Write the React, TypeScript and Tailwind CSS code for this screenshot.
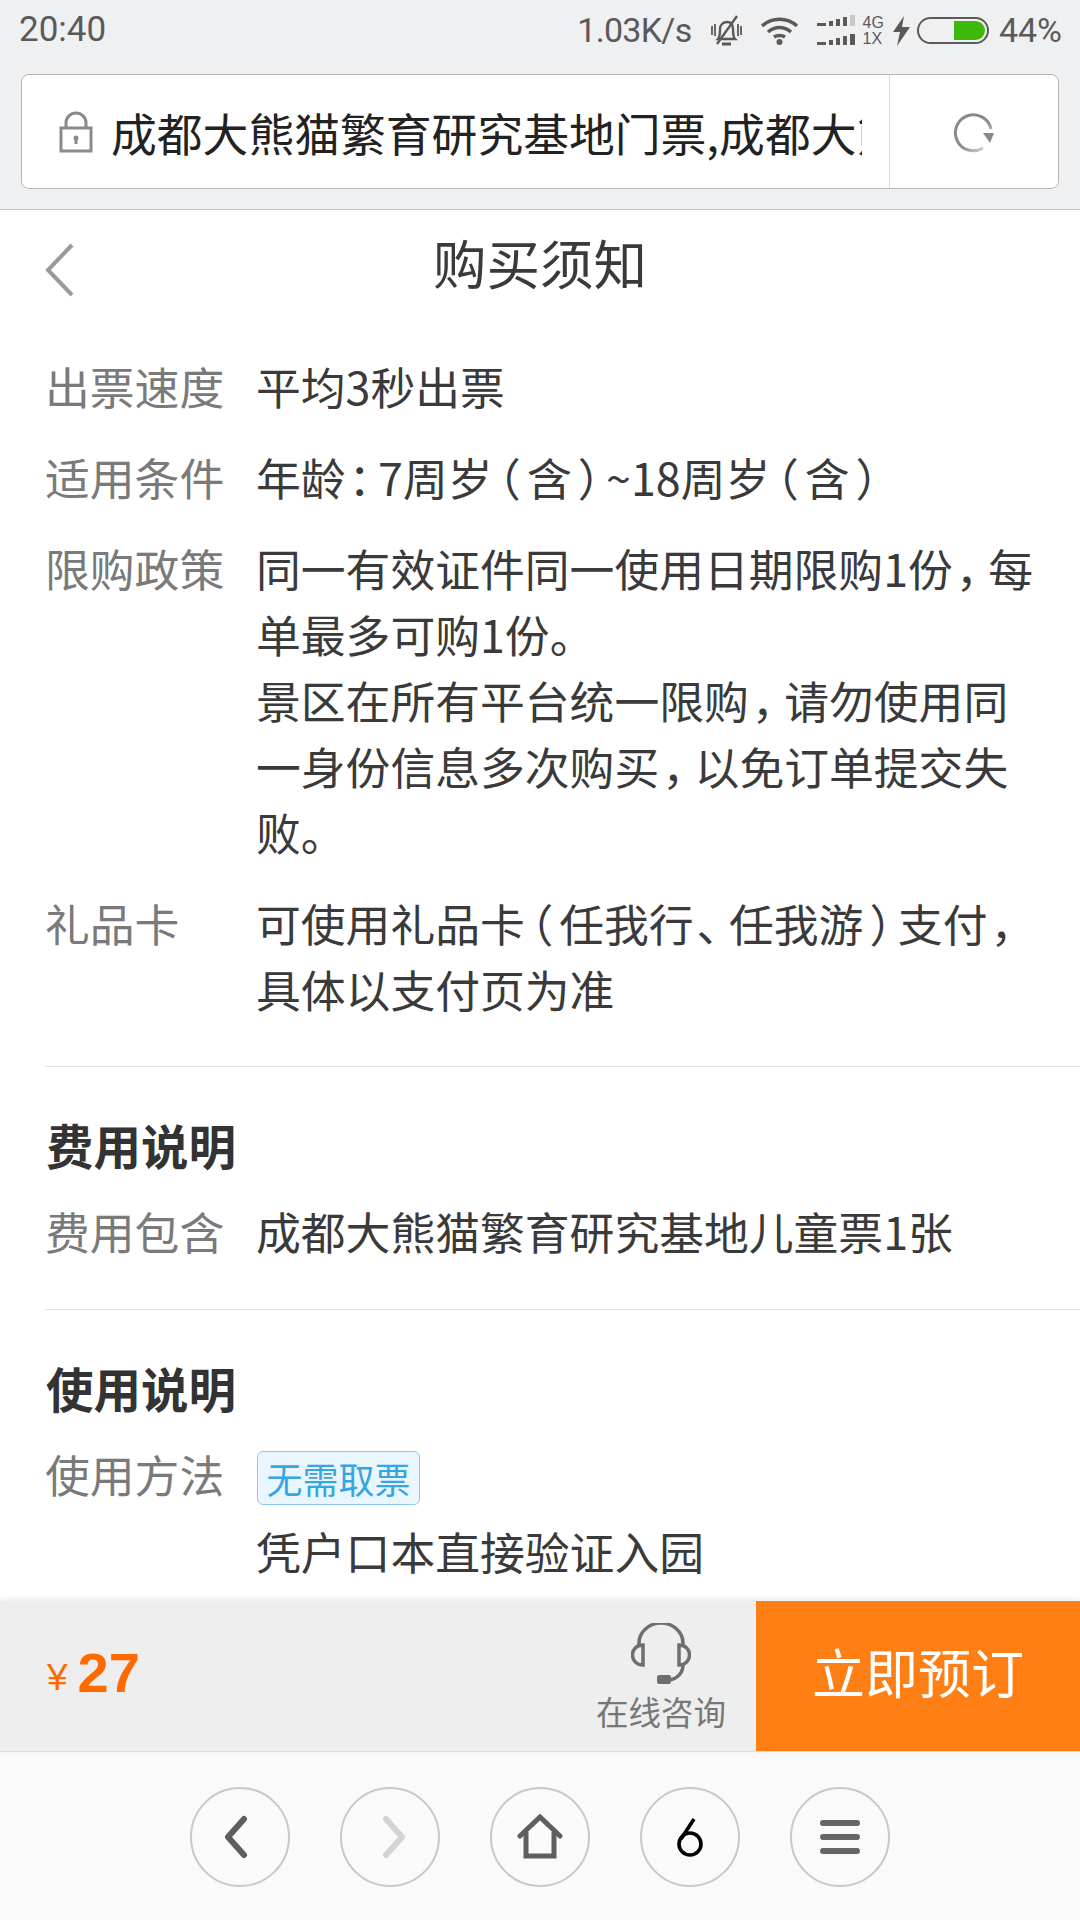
const SANS = "font-['Noto_Sans_CJK_SC','Noto_Sans',sans-serif]";

function Row({ label, children }: { label: string; children: React.ReactNode }) {
  return (
    <div className="flex">
      <div className="w-[211px] shrink-0 text-[#7a7a7a]">{label}</div>
      <div className="flex-1 text-[#3a3a3a]">{children}</div>
    </div>
  );
}

function Paren({ c }: { c: string }) {
  return <span className="px-[6px] [font-feature-settings:'halt']">{c}</span>;
}

function Comma({ c }: { c: string }) {
  return <span className="pl-[3px] pr-[10px] [font-feature-settings:'halt']">{c}</span>;
}

function Colon({ c }: { c: string }) {
  return <span className="pl-[3px] pr-[7px] [font-feature-settings:'halt']">{c}</span>;
}

function Circle({ children }: { children: React.ReactNode }) {
  return (
    <div className="w-[100px] h-[100px] rounded-full border-2 border-[#c8c8c8] flex items-center justify-center">
      {children}
    </div>
  );
}

export default function App() {
  return (
    <div className={`w-[1080px] h-[1920px] flex flex-col overflow-hidden bg-white ${SANS}`}>
      <div className="h-[210px] shrink-0 bg-[#eff0f2] border-b border-[#c4c4c4] flex flex-col">
        <div className="h-[60px] pt-[1px] flex items-center pl-[19px] pr-[18px] text-[#5a5a5a] font-['Roboto',sans-serif] text-[34px]">
          <span className="text-[35px]">20:40</span>
          <div className="ml-auto flex items-center">
            <span className="tracking-[-0.7px]">1.03K/s</span>
            <svg width="33" height="32" viewBox="0 0 33 32" className="ml-[18px]" fill="none" stroke="#5a5a5a" strokeWidth="2.4">
              <path d="M8 24c2-2 2-6 2-10 0-4 3-7 7-7s6 3 6 7c0 4 0 8 2 10z" />
              <path d="M12 29h9" strokeWidth="3" />
              <path d="M2 11v9M5 9v12M28 9v12M31 11v9" strokeWidth="1.8" />
              <path d="M27 1 7 29" />
            </svg>
            <svg width="39" height="30" viewBox="0 0 39 30" className="ml-[17px]" fill="none" stroke="#5a5a5a" strokeWidth="3.6">
              <path d="M2 10c10-9 25-9 35 0" />
              <path d="M8 16c7-6 16-6 23 0" />
              <path d="M14 21c3-2 8-2 11 0" />
              <circle cx="19.500" cy="26" r="3" fill="#5a5a5a" stroke="none" />
            </svg>
            <svg width="38" height="32" viewBox="0 0 38 32" className="ml-[18px]" fill="#5a5a5a">
              <rect x="0" y="8" width="9" height="3" /><rect x="12" y="6" width="4" height="5" /><rect x="19" y="4" width="4" height="7" /><rect x="26" y="2" width="4" height="9" /><rect x="33" y="0" width="5" height="11" fill="#c9c9c9" />
              <rect x="0" y="27" width="9" height="3" /><rect x="12" y="25" width="4" height="5" /><rect x="19" y="23" width="4" height="7" /><rect x="26" y="21" width="4" height="9" /><rect x="33" y="19" width="5" height="11" />
            </svg>
            <div className="ml-[8px] flex flex-col text-[16px] leading-[16px] text-[#5a5a5a] font-['Liberation_Sans',sans-serif]">
              <span>4G</span>
              <span>1X</span>
            </div>
            <svg width="17" height="30" viewBox="0 0 17 30" className="ml-[9px]" fill="#5a5a5a"><path d="M11 0 0 16h7l-3 14 13-19H9z" /></svg>
            <div className="ml-[7px] w-[72px] h-[27px] rounded-full border-2 border-[#5a5a5a] flex justify-end items-center pr-[2px]">
              <div className="w-[31px] h-[19px] bg-[#3fb80c] rounded-r-full" />
            </div>
            <span className="ml-[10px]">44%</span>
          </div>
        </div>
        <div className="mx-[21px] mt-[14px] h-[115px] bg-white border border-[#b5b5b5] rounded-[8px] flex items-center">
          <svg width="34" height="42" viewBox="0 0 34 42" className="ml-[37px] shrink-0" fill="none" stroke="#8a8a8a" strokeWidth="3">
            <rect x="2" y="17" width="30" height="23" />
            <path d="M7 17v-5a10 10 0 0 1 20 0v5" />
            <circle cx="17" cy="27" r="2.500" fill="#8a8a8a" stroke="none" />
            <path d="M17 28v5" />
          </svg>
          <div className="ml-[18px] w-[751px] shrink-0 overflow-hidden whitespace-nowrap text-[45.8px] leading-[62px] text-[#222222]">
            成都大熊猫繁育研究基地门票,成都大熊猫繁育
          </div>
          <div className="ml-[27px] self-stretch flex-1 border-l border-[#dcdcdc] flex items-center justify-center">
            <svg width="42" height="42" viewBox="0 0 42 42" fill="none" className="mt-[2px]">
              <defs>
                <linearGradient id="refreshFade" x1="0" y1="0" x2="1" y2="1">
                  <stop offset="0.55" stopColor="#8a8a8a" />
                  <stop offset="1" stopColor="#e6e6e6" />
                </linearGradient>
              </defs>
              <path d="M30 36A18 18 0 1 1 38 17" stroke="url(#refreshFade)" strokeWidth="3" />
              <path d="M30 21h11l-4 10z" fill="#8a8a8a" />
            </svg>
          </div>
        </div>
      </div>

      <div className="flex-1 min-h-0 overflow-hidden text-[44.8px] leading-[66px]">
        <div className="h-[111px] flex items-center relative pb-[7px]">
          <svg width="32" height="54" viewBox="0 0 32 54" className="ml-[44px] mt-[15px]" fill="none" stroke="#9a9a9a" strokeWidth="4">
            <path d="M28 2 4 27l24 25" />
          </svg>
          <div className="absolute inset-x-0 text-center text-[53.5px] text-[#3a3a3a]">购买须知</div>
        </div>
        <div className="pl-[45px]">
          <div className="pt-[32px] pr-[36px] pb-[44px] flex flex-col gap-[25px] border-b border-[#e2e2e2]">
            <Row label="出票速度">平均3秒出票</Row>
            <Row label="适用条件">
              年龄<Colon c="：" />7周岁<Paren c="（" />含<Paren c="）" />~18周岁<Paren c="（" />含<Paren c="）" />
            </Row>
            <Row label="限购政策">
              同一有效证件同一使用日期限购1份<Comma c="，" />每单最多可购1份。
              <br />
              景区在所有平台统一限购<Comma c="，" />请勿使用同一身份信息多次购买<Comma c="，" />以免订单提交失败。
            </Row>
            <Row label="礼品卡">
              可使用礼品卡<Paren c="（" />任我行<Comma c="、" />任我游<Paren c="）" />支付<Comma c="，" />具体以支付页为准
            </Row>
          </div>
          <div className="pt-[45px] pb-[45px] border-b border-[#e2e2e2]">
            <div className="font-bold text-[47.5px] text-[#333333] mb-[20px] ml-[1px]">费用说明</div>
            <Row label="费用包含">成都大熊猫繁育研究基地儿童票1张</Row>
          </div>
          <div className="pt-[45px]">
            <div className="font-bold text-[47.5px] text-[#333333] mb-[20px] ml-[1px]">使用说明</div>
            <Row label="使用方法">
              <div className="w-[163px] h-[54px] mt-[10px] ml-[1px] rounded-[6px] border border-[#8cc8ee] bg-[#e9f6fd] text-[#35a5e4] text-[36px] leading-[52px] text-center mb-[13px]">
                无需取票
              </div>
              <div>凭户口本直接验证入园</div>
            </Row>
          </div>
        </div>
      </div>

      <div className="h-[151px] shrink-0 flex bg-[#eeeeee] border-b border-[#dedede] shadow-[0_-2px_6px_rgba(0,0,0,0.08)] relative">
        <div className="flex-1 flex items-center pl-[47px] pb-[6px] text-[#ff6a00]">
          <span className="text-[37px] mt-[10px] font-['Liberation_Sans',sans-serif]">¥</span>
          <span className="ml-[10px] text-[56px] leading-none font-bold font-['Liberation_Sans',sans-serif]">27</span>
        </div>
        <div className="w-[160px] mr-[15px] flex flex-col items-center">
          <svg width="60" height="62" viewBox="0 0 60 62" className="mt-[22px]" fill="none" stroke="#6e6e6e" strokeWidth="3.500">
            <path d="M8 22v-2a21 19 0 0 1 44 0v2" />
            <path d="M12 22c-14 0-14 20 0 20z" />
            <path d="M48 22c14 0 14 20 0 20z" />
            <path d="M52 42c0 8-6 14-14 15" />
            <rect x="26" y="52" width="14" height="9" rx="2" fill="#6e6e6e" stroke="none" />
          </svg>
          <span className="text-[32.500px] leading-[40px] mt-[6px] text-[#777777] whitespace-nowrap">在线咨询</span>
        </div>
        <div className="w-[324px] flex items-center justify-center bg-[#ff7f14] text-white text-[53px] pb-[8px]">立即预订</div>
      </div>

      <div className="h-[168px] shrink-0 bg-[#fafafa] flex items-start justify-center gap-[50px] pt-[35px]">
        <Circle>
          <svg width="26" height="44" viewBox="0 0 26 44" className="mr-[8px]" fill="none" stroke="#5e5e5e" strokeWidth="6" strokeLinecap="round" strokeLinejoin="round"><path d="M21 4 5 22l16 18" /></svg>
        </Circle>
        <Circle>
          <svg width="26" height="44" viewBox="0 0 26 44" className="ml-[7px]" fill="none" stroke="#d4d4d4" strokeWidth="6" strokeLinecap="round" strokeLinejoin="round"><path d="M5 4l16 18L5 40" /></svg>
        </Circle>
        <Circle>
          <svg width="46" height="46" viewBox="0 0 46 46" fill="none" stroke="#5e5e5e" strokeWidth="5" strokeLinecap="round"><path d="M3 22 23 3l20 19" /><path d="M9 19v23h28V19" /></svg>
        </Circle>
        <Circle>
          <svg width="28" height="40" viewBox="0 0 28 40" fill="none" stroke="#000000" strokeWidth="3.600"><path d="M18 2 5 22" /><circle cx="14" cy="27" r="11" /></svg>
        </Circle>
        <Circle>
          <div className="flex flex-col gap-[8px]">
            <div className="w-[40px] h-[6px] rounded-full bg-[#666666]" />
            <div className="w-[40px] h-[6px] rounded-full bg-[#666666]" />
            <div className="w-[40px] h-[6px] rounded-full bg-[#666666]" />
          </div>
        </Circle>
      </div>
    </div>
  );
}
